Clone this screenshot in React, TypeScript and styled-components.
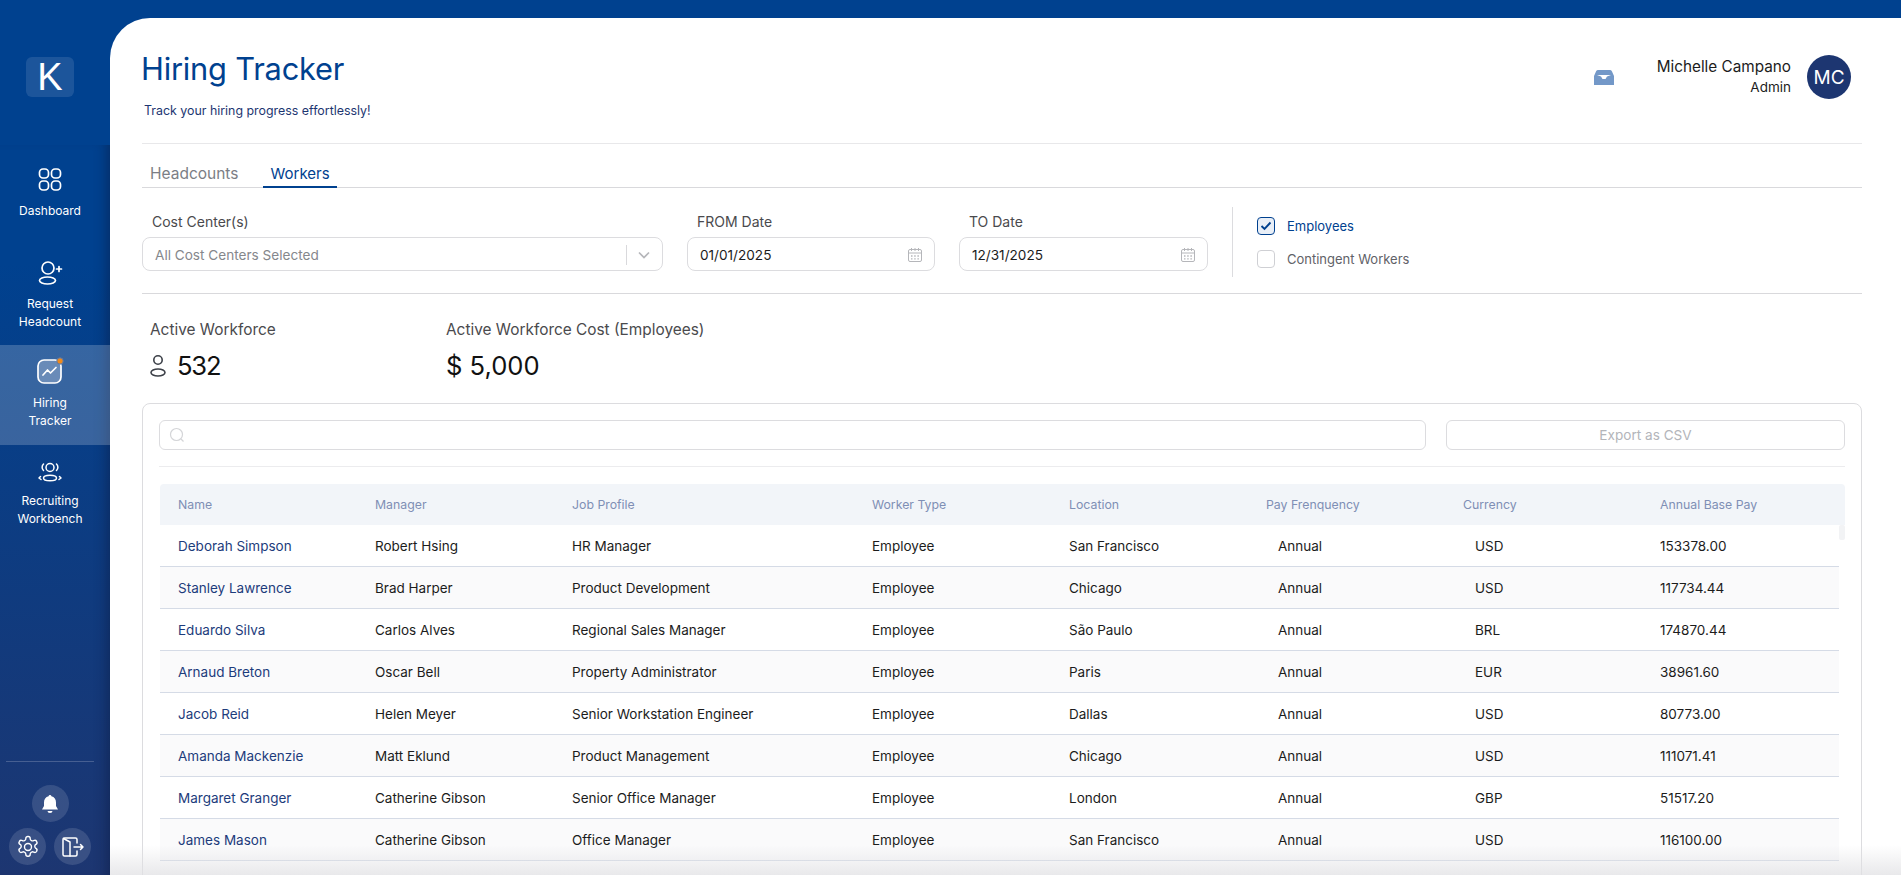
import React from "react";
import styled, { createGlobalStyle } from "styled-components";

const Global = createGlobalStyle`
  html, body { margin: 0; padding: 0; height: 100%; overflow: hidden; background: #004190; }
  #root { height: 100%; }
  * { box-sizing: border-box; }
  body { font-family: Inter, "Liberation Sans", sans-serif; }
`;

const Page = styled.div`
  display: flex;
  height: 875px;
  width: 1901px;
  overflow: hidden;
  background: #00418f;
`;

const Sidebar = styled.aside`
  width: 110px;
  flex: none;
  display: flex;
  flex-direction: column;
  background: linear-gradient(180deg, #00418f 0%, #00418f 30%, #1d3671 100%);
`;

const LogoArea = styled.div`
  height: 145px;
  padding: 57px 10px 0 0;
  display: flex;
  justify-content: center;
  flex: none;
`;

const Logo = styled.div`
  width: 48px;
  height: 40px;
  border-radius: 6px;
  background: rgba(255, 255, 255, 0.11);
  color: #fff;
  font-family: "Liberation Sans", Arial, sans-serif;
  font-size: 38px;
  line-height: 40px;
  font-weight: 400;
  text-align: center;
`;

const Nav = styled.nav`
  flex: 1;
  display: flex;
  flex-direction: column;
  box-shadow: inset -12px 0 12px -8px rgba(10, 25, 60, 0.45);
`;

const NavItem = styled.div<{ $active?: boolean; $h: number; $top: number }>`
  height: ${(p) => p.$h}px;
  padding: ${(p) => p.$top}px 10px 0 0;
  display: flex;
  flex-direction: column;
  align-items: center;
  color: #fff;
  background: ${(p) => (p.$active ? "rgba(255,255,255,0.2)" : "transparent")};
`;

const NavLabel = styled.div<{ $mt: number }>`
  font-size: 12px;
  line-height: 18px;
  text-align: center;
  margin-top: ${(p) => p.$mt}px;
  color: #fff;
`;

const NavIcon = styled.div`
  height: 30px;
  display: flex;
  align-items: center;
  justify-content: center;
`;

const SideFoot = styled.div`
  flex: 1;
  display: flex;
  flex-direction: column;
  justify-content: flex-end;
  align-items: center;
  padding: 0 10px 10px 0;
`;

const FootRule = styled.div`
  width: 88px;
  height: 1px;
  background: rgba(255, 255, 255, 0.2);
  margin-bottom: 23px;
`;

const RoundBtn = styled.div`
  width: 37px;
  height: 37px;
  border-radius: 50%;
  background: rgba(255, 255, 255, 0.13);
  display: flex;
  align-items: center;
  justify-content: center;
`;

const FootRow = styled.div`
  display: flex;
  gap: 8px;
  margin-top: 6px;
`;

const Main = styled.main`
  flex: 1;
  margin-top: 18px;
  background: #fff;
  border-top-left-radius: 40px;
  padding: 0 39px 0 32px;
  position: relative;
  overflow: hidden;
  min-width: 0;
`;

const Header = styled.header`
  height: 126px;
  display: flex;
  justify-content: space-between;
  border-bottom: 1px solid #e8e8ea;
`;

const TitleBlock = styled.div`
  padding-top: 30px;
`;

const Title = styled.h1`
  margin: 0 0 0 -1px;
  font-size: 30.8px;
  line-height: 42px;
  font-weight: 400;
  color: #00418f;
  letter-spacing: -0.2px;
`;

const Subtitle = styled.p`
  margin: 12px 0 0 2px;
  font-size: 12.4px;
  line-height: 18px;
  color: #1d3671;
`;

const UserArea = styled.div`
  display: flex;
  align-items: flex-start;
  padding-top: 39px;
  padding-right: 11px;
`;

const InboxWrap = styled.div`
  margin-top: 13px;
  margin-right: 43px;
  line-height: 0;
`;

const UserText = styled.div`
  text-align: right;
  margin-right: 16px;
  color: #1c1c1c;
`;

const UserName = styled.div`
  font-size: 15.3px;
  line-height: 20px;
`;

const UserRole = styled.div`
  font-size: 13.5px;
  line-height: 20px;
`;

const Avatar = styled.div`
  width: 44px;
  height: 44px;
  margin-top: -2px;
  border-radius: 50%;
  background: #1d3671;
  color: #fff;
  font-size: 19px;
  display: flex;
  align-items: center;
  justify-content: center;
`;

const Tabs = styled.div`
  height: 44px;
  display: flex;
  align-items: flex-end;
  padding-left: 1px;
  border-bottom: 1px solid #d9d9dc;
`;

const Tab = styled.div<{ $active?: boolean }>`
  height: 27px;
  padding: 2px 7px 0;
  margin-bottom: -1px;
  margin-right: ${(p) => (p.$active ? 0 : 18)}px;
  font-size: ${(p) => (p.$active ? 15 : 15.5)}px;
  line-height: 22px;
  color: ${(p) => (p.$active ? "#00418f" : "#7b7e85")};
  border-bottom: 2px solid ${(p) => (p.$active ? "#00418f" : "transparent")};
`;

const Filters = styled.section`
  height: 106px;
  display: flex;
  padding-top: 23px;
  border-bottom: 1px solid #d9d9dc;
`;

const Field = styled.div<{ $w: number; $mr: number }>`
  width: ${(p) => p.$w}px;
  margin-right: ${(p) => p.$mr}px;
  flex: none;
`;

const FieldLabel = styled.div`
  font-size: 14px;
  line-height: 22px;
  color: #4a4a4d;
  padding-left: 10px;
  margin-bottom: 4px;
`;

const InputBox = styled.div<{ $h: number }>`
  height: ${(p) => p.$h}px;
  border: 1px solid #dcdcdf;
  border-radius: 8px;
  display: flex;
  align-items: center;
  justify-content: space-between;
  padding: 1px 11px 0 12px;
  font-size: 13.6px;
`;

const SelectText = styled.span`
  color: #85878c;
`;

const SelectEnd = styled.div`
  display: flex;
  align-items: center;
  gap: 10px;
`;

const VSep = styled.div`
  width: 1px;
  height: 20px;
  background: #d9d9dc;
`;

const DateText = styled.span`
  color: #1c1c1c;
`;

const CheckGroup = styled.div`
  height: 70px;
  margin-top: -4px;
  margin-left: 1px;
  padding: 10px 0 0 24px;
  border-left: 1px solid #dcdcdf;
  display: flex;
  flex-direction: column;
  gap: 15px;
`;

const CheckRow = styled.div<{ $on?: boolean }>`
  display: flex;
  align-items: center;
  gap: 12px;
  font-size: 13px;
  line-height: 18px;
  color: ${(p) => (p.$on ? "#00418f" : "#5f6268")};
`;

const Box = styled.div<{ $on?: boolean }>`
  width: 18px;
  height: 18px;
  border-radius: 4px;
  border: 1px solid ${(p) => (p.$on ? "#00418f" : "#cfd0d4")};
  background: ${(p) => (p.$on ? "#e9eff7" : "#fff")};
  display: flex;
  align-items: center;
  justify-content: center;
`;

const Stats = styled.section`
  height: 109px;
  display: flex;
  padding: 26px 0 0 8px;
`;

const Stat = styled.div<{ $w: number }>`
  width: ${(p) => p.$w}px;
`;

const StatLabel = styled.div`
  font-size: 15.4px;
  line-height: 20px;
  color: #4a4a4d;
`;

const StatValue = styled.div`
  font-size: 25.6px;
  line-height: 32px;
  margin-top: 10px;
  color: #111;
  display: flex;
  align-items: center;
  gap: 11px;
`;

const NarrowNumber = styled.span`
  letter-spacing: -1.2px;
`;

const Card = styled.section`
  border: 1px solid #dcdcdf;
  border-radius: 8px;
  padding: 16px 16px 0;
  height: 500px;
`;

const SearchRow = styled.div`
  display: flex;
  gap: 20px;
  height: 30px;
`;

const SearchBox = styled.div`
  flex: 1;
  border: 1px solid #dcdcdf;
  border-radius: 6px;
  display: flex;
  align-items: center;
  padding-left: 9px;
`;

const ExportBtn = styled.div`
  width: 399px;
  border: 1px solid #dcdcdf;
  border-radius: 6px;
  display: flex;
  align-items: center;
  justify-content: center;
  font-size: 13.6px;
  color: #b3b5ba;
`;

const CardRule = styled.div`
  height: 1px;
  background: #ececee;
  margin: 16px 0 17px;
`;

const columns = "197px 197px 300px 197px 197px 197px 197px 1fr";

const TableHead = styled.div`
  height: 41px;
  background: #f2f5f9;
  border-radius: 4px 4px 0 0;
  margin-left: 1px;
  display: grid;
  grid-template-columns: ${columns};
  align-items: center;
  padding-left: 18px;
  font-size: 12.3px;
  color: #7f8fb5;
`;

const BodyWrap = styled.div`
  display: flex;
  margin-left: 1px;
`;

const Rows = styled.div`
  flex: 1;
  min-width: 0;
`;

const Row = styled.div<{ $alt?: boolean }>`
  height: 42px;
  display: grid;
  grid-template-columns: ${columns};
  align-items: center;
  padding-left: 18px;
  border-bottom: 1px solid #d5dbe6;
  background: ${(p) => (p.$alt ? "#fafafb" : "#fff")};
  font-size: 13.5px;
  color: #1c1c1c;
`;

const NameCell = styled.span`
  color: #1d3c7c;
`;

const Indented = styled.span`
  padding-left: 12px;
`;

const Track = styled.div`
  width: 6px;
  flex: none;
`;

const Thumb = styled.div`
  height: 15px;
  background: #f2f3f5;
  border-radius: 2px;
`;

const BottomFade = styled.div`
  position: absolute;
  left: 0;
  right: 0;
  bottom: 0;
  height: 30px;
  background: linear-gradient(180deg, rgba(225, 225, 228, 0) 0%, rgba(225, 225, 228, 0.75) 100%);
  pointer-events: none;
`;

const stroke = { fill: "none", stroke: "#fff", strokeWidth: 1.7, strokeLinecap: "round" as const, strokeLinejoin: "round" as const };

const people = [
  ["Deborah Simpson", "Robert Hsing", "HR Manager", "San Francisco", "USD", "153378.00"],
  ["Stanley Lawrence", "Brad Harper", "Product Development", "Chicago", "USD", "117734.44"],
  ["Eduardo Silva", "Carlos Alves", "Regional Sales Manager", "São Paulo", "BRL", "174870.44"],
  ["Arnaud Breton", "Oscar Bell", "Property Administrator", "Paris", "EUR", "38961.60"],
  ["Jacob Reid", "Helen Meyer", "Senior Workstation Engineer", "Dallas", "USD", "80773.00"],
  ["Amanda Mackenzie", "Matt Eklund", "Product Management", "Chicago", "USD", "111071.41"],
  ["Margaret Granger", "Catherine Gibson", "Senior Office Manager", "London", "GBP", "51517.20"],
  ["James Mason", "Catherine Gibson", "Office Manager", "San Francisco", "USD", "116100.00"],
];

const heads = ["Name", "Manager", "Job Profile", "Worker Type", "Location", "Pay Frenquency", "Currency", "Annual Base Pay"];

const CalendarIcon = () => (
  <svg width="16" height="16" viewBox="0 0 16 16" fill="none" stroke="#b5b6ba" strokeWidth="1">
    <rect x="1.5" y="2.5" width="13" height="12" rx="1.5" />
    <path d="M1.5 6h13M4.5 1v3M8 1v3M11.5 1v3" />
    <path d="M4 9h1.5M7.2 9h1.5M10.4 9h1.5M4 11.8h1.5M7.2 11.8h1.5M10.4 11.8h1.5" strokeWidth="1.3" />
  </svg>
);

export default function App() {
  return (
    <Page>
      <Global />
      <Sidebar>
        <LogoArea>
          <Logo>K</Logo>
        </LogoArea>
        <Nav>
          <NavItem $h={100} $top={20}>
            <NavIcon>
              <svg width="26" height="26" viewBox="0 0 26 26" {...stroke}>
                <rect x="2.5" y="2" width="9" height="9" rx="3.5" />
                <rect x="14.5" y="2" width="9" height="9" rx="3.5" />
                <rect x="2.5" y="14" width="9" height="9" rx="3.5" />
                <rect x="14.5" y="14" width="9" height="9" rx="3.5" />
              </svg>
            </NavIcon>
            <NavLabel $mt={7}>Dashboard</NavLabel>
          </NavItem>
          <NavItem $h={100} $top={13}>
            <NavIcon>
              <svg width="26" height="26" viewBox="0 0 26 26" {...stroke}>
                <circle cx="11" cy="8" r="6" />
                <ellipse cx="10.5" cy="20.5" rx="8" ry="3.5" />
                <path d="M19.5 9h5M22 6.5v5" />
              </svg>
            </NavIcon>
            <NavLabel $mt={7}>Request<br />Headcount</NavLabel>
          </NavItem>
          <NavItem $active $h={100} $top={11}>
            <NavIcon>
              <svg width="28" height="28" viewBox="0 0 28 28">
                <rect x="2" y="3" width="23" height="23" rx="6" fill="rgba(255,255,255,0.25)" stroke="#fff" strokeWidth="1.7" />
                <path d="M7 18l4.5-5 3 3 5.5-5.5" fill="none" stroke="#fff" strokeWidth="1.7" strokeLinecap="round" strokeLinejoin="round" />
                <circle cx="24" cy="4" r="3.2" fill="#f08a1c" stroke="#5a79aa" strokeWidth="1" />
              </svg>
            </NavIcon>
            <NavLabel $mt={8}>Hiring<br />Tracker</NavLabel>
          </NavItem>
          <NavItem $h={100} $top={12}>
            <NavIcon>
              <svg width="24" height="22" viewBox="0 0 24 22" {...stroke} strokeWidth="1.5">
                <circle cx="12" cy="6.5" r="4" />
                <ellipse cx="12" cy="17" rx="6.5" ry="2.8" />
                <path d="M5.5 3a4.5 4.5 0 0 0 0 6.5M18.5 3a4.5 4.5 0 0 1 0 6.5M2.5 15.5 1 17l2 1.5M21.5 15.5 23 17l-2 1.5" />
              </svg>
            </NavIcon>
            <NavLabel $mt={5}>Recruiting<br />Workbench</NavLabel>
          </NavItem>
          <SideFoot>
            <FootRule />
            <RoundBtn>
              <svg width="18" height="20" viewBox="0 0 18 20" fill="#fff">
                <path d="M9 1c.8 0 1.4.6 1.4 1.3C13.4 3 15 5.5 15 8.5v3.5l2 3.5H1l2-3.5V8.500C3 5.500 4.600 3 7.600 2.300 7.600 1.600 8.200 1 9 1Z" />
                <path d="M6.500 17h5a2.500 2 0 0 1-5 0Z" />
              </svg>
            </RoundBtn>
            <FootRow>
              <RoundBtn>
                <svg width="24" height="24" viewBox="0 0 24 24" {...stroke} strokeWidth="1.4">
                  <path d="M12.2 2.500h-.4a2 2 0 0 0-2 2v.2a2 2 0 0 1-1 1.700l-.4.200a2 2 0 0 1-2 0l-.2-.1a2 2 0 0 0-2.700.7l-.2.400a2 2 0 0 0 .7 2.700l.2.100a2 2 0 0 1 1 1.700v.5a2 2 0 0 1-1 1.700l-.2.100a2 2 0 0 0-.7 2.700l.2.400a2 2 0 0 0 2.700.7l.2-.1a2 2 0 0 1 2 0l.4.200a2 2 0 0 1 1 1.700v.2a2 2 0 0 0 2 2h.4a2 2 0 0 0 2-2v-.2a2 2 0 0 1 1-1.700l.4-.2a2 2 0 0 1 2 0l.2.100a2 2 0 0 0 2.700-.7l.2-.4a2 2 0 0 0-.7-2.700l-.2-.1a2 2 0 0 1-1-1.700v-.5a2 2 0 0 1 1-1.700l.2-.1a2 2 0 0 0 .7-2.700l-.2-.4a2 2 0 0 0-2.700-.7l-.2.1a2 2 0 0 1-2 0l-.4-.2a2 2 0 0 1-1-1.700v-.2a2 2 0 0 0-2-2Z" transform="translate(0 -1)" />
                  <circle cx="12" cy="12" r="3.500" />
                </svg>
              </RoundBtn>
              <RoundBtn>
                <svg width="24" height="24" viewBox="0 0 24 24" {...stroke} strokeWidth="1.5">
                  <path d="M16 8V4.500A1.500 1.500 0 0 0 14.500 3H3.500A1.500 1.500 0 0 0 2 4.500v15A1.500 1.500 0 0 0 3.500 21h11a1.500 1.500 0 0 0 1.500-1.500V16" />
                  <path d="M2.500 3.500 9 7v14" />
                  <path d="M13 12h9M19.500 9.500 22 12l-2.500 2.500" />
                </svg>
              </RoundBtn>
            </FootRow>
          </SideFoot>
        </Nav>
      </Sidebar>
      <Main>
        <Header>
          <TitleBlock>
            <Title>Hiring Tracker</Title>
            <Subtitle>Track your hiring progress effortlessly!</Subtitle>
          </TitleBlock>
          <UserArea>
            <InboxWrap>
              <svg width="20" height="15" viewBox="0 0 20 15">
                <path d="M4 0h12a2 2 0 0 1 2 1.500L20 6v9H0V6l2-4.500A2 2 0 0 1 4 0Z" fill="#7398c8" />
                <path d="M3 5h14l-4 1.500-1.500 2.500h-3L7 6.500Z" fill="#fff" />
              </svg>
            </InboxWrap>
            <UserText>
              <UserName>Michelle Campano</UserName>
              <UserRole>Admin</UserRole>
            </UserText>
            <Avatar>MC</Avatar>
          </UserArea>
        </Header>
        <Tabs>
          <Tab>Headcounts</Tab>
          <Tab $active>Workers</Tab>
        </Tabs>
        <Filters>
          <Field $w={521} $mr={24}>
            <FieldLabel>Cost Center(s)</FieldLabel>
            <InputBox $h={34}>
              <SelectText>All Cost Centers Selected</SelectText>
              <SelectEnd>
                <VSep />
                <svg width="14" height="10" viewBox="0 0 14 10" fill="none" stroke="#b5b6ba" strokeWidth="1.7">
                  <path d="M2 2.500 7 7.500l5-5" />
                </svg>
              </SelectEnd>
            </InputBox>
          </Field>
          <Field $w={248} $mr={24}>
            <FieldLabel>FROM Date</FieldLabel>
            <InputBox $h={34}>
              <DateText>01/01/2025</DateText>
              <CalendarIcon />
            </InputBox>
          </Field>
          <Field $w={249} $mr={23}>
            <FieldLabel>TO Date</FieldLabel>
            <InputBox $h={34}>
              <DateText>12/31/2025</DateText>
              <CalendarIcon />
            </InputBox>
          </Field>
          <CheckGroup>
            <CheckRow $on>
              <Box $on>
                <svg width="12" height="10" viewBox="0 0 12 10" fill="none" stroke="#00418f" strokeWidth="1.9">
                  <path d="M1.500 5 4.500 8l6-6.500" />
                </svg>
              </Box>
              Employees
            </CheckRow>
            <CheckRow>
              <Box />
              Contingent Workers
            </CheckRow>
          </CheckGroup>
        </Filters>
        <Stats>
          <Stat $w={296}>
            <StatLabel>Active Workforce</StatLabel>
            <StatValue>
              <svg width="16" height="24" viewBox="0 0 16 24" fill="none" stroke="#3c4048" strokeWidth="1.6">
                <circle cx="8" cy="6" r="4.200" />
                <ellipse cx="8" cy="18.500" rx="7" ry="3.500" />
              </svg>
              <NarrowNumber>532</NarrowNumber>
            </StatValue>
          </Stat>
          <Stat $w={400}>
            <StatLabel>Active Workforce Cost (Employees)</StatLabel>
            <StatValue>$ 5,000</StatValue>
          </Stat>
        </Stats>
        <Card>
          <SearchRow>
            <SearchBox>
              <svg width="16" height="16" viewBox="0 0 16 16" fill="none" stroke="#d4d5d8" strokeWidth="1.2">
                <circle cx="7.500" cy="7.500" r="6" />
                <path d="M12 12l2.500 2.500" />
              </svg>
            </SearchBox>
            <ExportBtn>Export as CSV</ExportBtn>
          </SearchRow>
          <CardRule />
          <TableHead>
            {heads.map((h) => (
              <span key={h}>{h}</span>
            ))}
          </TableHead>
          <BodyWrap>
            <Rows>
              {people.map((p, i) => (
                <Row key={p[0]} $alt={i % 2 === 1}>
                  <NameCell>{p[0]}</NameCell>
                  <span>{p[1]}</span>
                  <span>{p[2]}</span>
                  <span>Employee</span>
                  <span>{p[3]}</span>
                  <Indented>Annual</Indented>
                  <Indented>{p[4]}</Indented>
                  <span>{p[5]}</span>
                </Row>
              ))}
            </Rows>
            <Track>
              <Thumb />
            </Track>
          </BodyWrap>
        </Card>
        <BottomFade />
      </Main>
    </Page>
  );
}
